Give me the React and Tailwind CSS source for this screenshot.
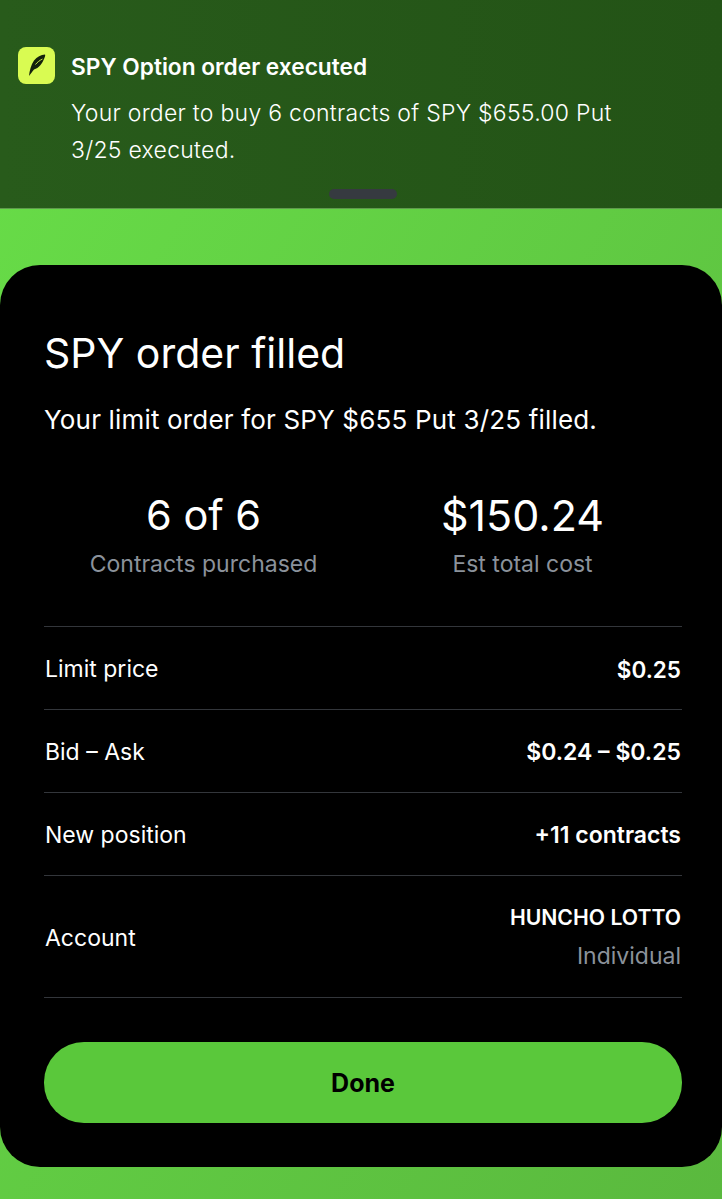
import React from 'react';

const Row = ({ label, labelClass = "", children }) => (
  <div className="flex items-center justify-between border-b border-[#33363b] h-[83px] pt-[3px] last:h-[122px] last:pt-0">
    <span className={`pl-[1px] text-[23px] text-white ${labelClass}`}>{label}</span>
    <div className="text-right pr-[1px]">{children}</div>
  </div>
);

const Stat = ({ value, valueClass, label }) => (
  <div className="flex-1 flex flex-col items-center">
    <div className={`leading-[52px] text-white ${valueClass}`}>{value}</div>
    <div className="mt-[9px] text-[23px] leading-[28px] text-[#8b929b]">{label}</div>
  </div>
);

export default function App() {
  return (
    <div className="w-[722px] h-[1199px] overflow-hidden flex flex-col bg-gradient-to-br from-[#68de48] to-[#5ab93e] font-['Inter',sans-serif]">
      {/* Notification banner */}
      <div className="relative h-[209px] shrink-0 bg-gradient-to-r from-[#285b1b] to-[#235316] border-b border-[#5f9a4c] pt-[47px] pl-[18px] pr-[100px] flex gap-[16px]">
        <div className="w-[37px] h-[37px] shrink-0 rounded-[8px] bg-[#d9fb52]">
          <svg viewBox="0 0 37 37" className="w-[37px] h-[37px]">
            <path
              d="M11 29 C11.5 24 13 18 16 13.5 C19 9.5 23 8 27 7.5 C27.5 8 27 10 26 12 C24 17 21 21 16 22.5 C14 25 12.5 27 11 29 Z"
              fill="#14210c"
            />
            <path d="M17.5 17.5 C19.5 15 21.5 13.5 24.5 12" fill="none" stroke="#d9fb52" strokeWidth="0.9" />
          </svg>
        </div>
        <div className="text-white">
          <div className="text-[22.7px] leading-[40px] font-semibold">SPY Option order executed</div>
          <p className="text-[23px] leading-[37px] mt-[8px] tracking-[0.27px] font-light">
            Your order to buy 6 contracts of SPY $655.00 Put 3/25 executed.
          </p>
        </div>
        <div className="absolute left-[329px] top-[189px] w-[68px] h-[10px] rounded-full bg-[#363a40]"></div>
      </div>

      {/* Order sheet */}
      <div className="mt-[56px] h-[902px] shrink-0 rounded-[40px] bg-black pl-[44px] pr-[40px] pt-[60px] flex flex-col">
        <h1 className="text-[41px] leading-[56px] font-normal text-white">SPY order filled</h1>
        <p className="mt-[23px] text-[26px] leading-[32px] tracking-[0.17px] text-white">Your limit order for SPY $655 Put 3/25 filled.</p>

        <div className="mt-[53px] flex">
          <Stat value="6 of 6" valueClass="text-[41.5px]" label="Contracts purchased" />
          <Stat value="$150.24" valueClass="text-[43px]" label="Est total cost" />
        </div>

        <div className="mt-[48px] border-t border-[#33363b] flex flex-col">
          <Row label="Limit price"><span className="text-[22.5px] font-semibold text-white">$0.25</span></Row>
          <Row label="Bid – Ask"><span className="text-[23px] font-semibold text-white">$0.24 – $0.25</span></Row>
          <Row label="New position"><span className="text-[23px] font-semibold text-white">+11 contracts</span></Row>
          <Row label="Account" labelClass="pt-[3px]">
            <div className="text-[21.2px] leading-[28px] font-semibold text-white">HUNCHO LOTTO</div>
            <div className="mt-[11px] text-[23px] leading-[28px] text-[#8b929b]">Individual</div>
          </Row>
        </div>

        <button className="mt-[44px] h-[81px] pt-[3px] rounded-[40px] bg-[#5ac83b] text-[25px] font-bold text-black">Done</button>
      </div>
    </div>
  );
}
